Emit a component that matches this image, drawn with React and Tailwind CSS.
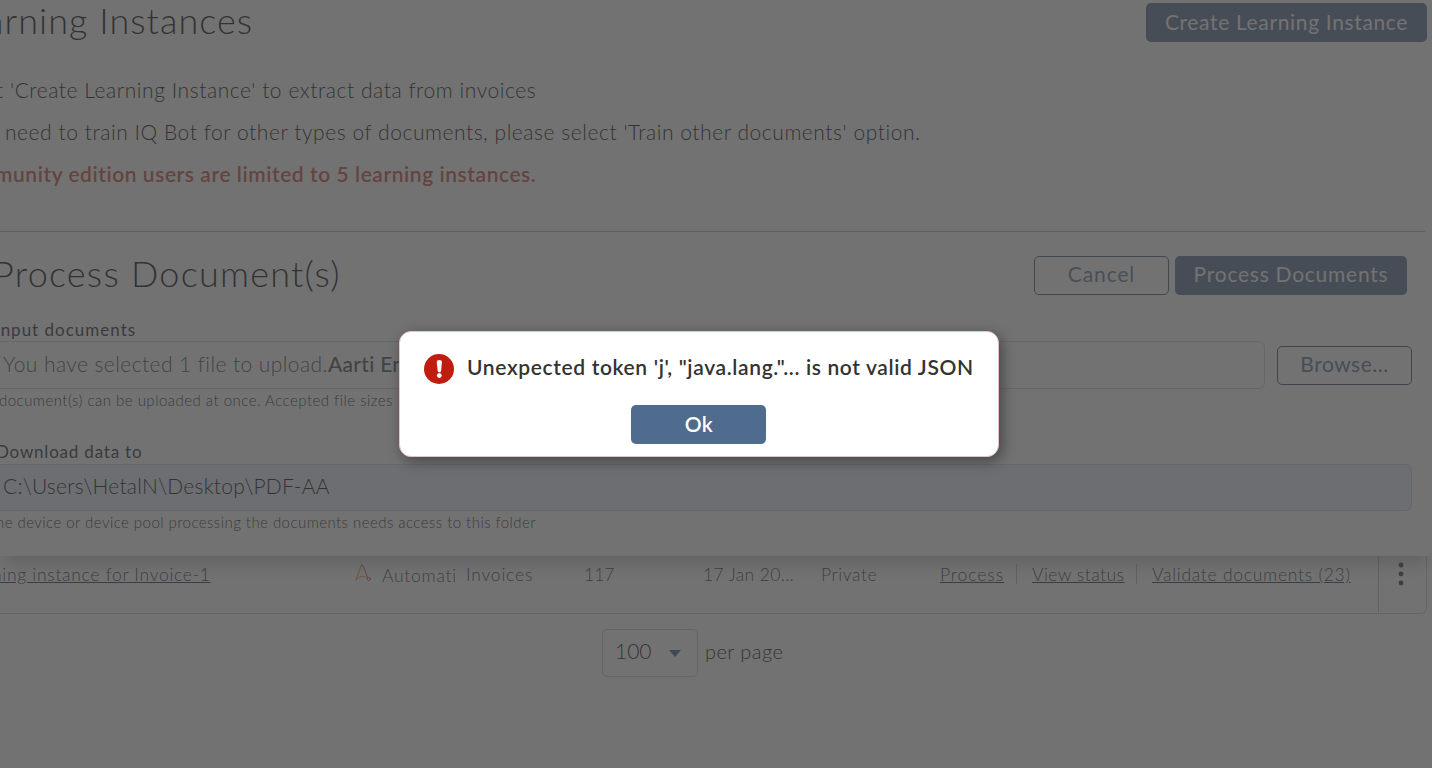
import React, { useState } from 'react';

const IconA = () => (
    <svg width="17" height="18" viewBox="0 0 17 18" fill="none" strokeWidth="1.1" strokeLinecap="round" strokeLinejoin="round">
        <path d="M6 1.9 Q7 0 8 1.9 L12.4 13.2" stroke="#d8603a" />
        <path d="M6 1.9 L1 16" stroke="#e89030" />
        <path d="M1 16 Q4 12.4 7.4 12.2 Q10 12.4 12.2 14.4" stroke="#e8803a" strokeWidth="0.9" />
        <circle cx="13.8" cy="15" r="1.6" stroke="#d8502a" strokeWidth="0.9" />
    </svg>
);

const ErrorIcon = () => (
    <svg width="30" height="30" viewBox="0 0 30 30" className="shrink-0">
        <circle cx="15" cy="15" r="15" fill="#c11c10" />
        <path d="M12.7 8.2 Q12.7 6 15.2 6 Q18 6 17.9 8.2 L17.1 17 Q17 18.4 15.4 18.4 Q13.9 18.4 13.7 17 Z" fill="#fff" />
        <circle cx="15.3" cy="21.6" r="2.4" fill="#fff" />
    </svg>
);

const Kebab = () => (
    <svg width="6" height="24" viewBox="0 0 6 24" fill="#333">
        <circle cx="3" cy="3" r="2.4" />
        <circle cx="3" cy="12" r="2.4" />
        <circle cx="3" cy="21" r="2.4" />
    </svg>
);

const InstanceRow = () => (
    <div className="flex h-[58px] w-[1427px] rounded-br-md border-b border-r border-[#c8cccf] text-[17.5px] leading-[38px] font-light text-[#333]">
        <a className="-ml-[8px] w-[360px] shrink-0 tracking-[0.7px] text-[#1c3048] underline underline-offset-1">ning instance for Invoice-1</a>
        <div className="flex w-[114px] shrink-0">
            <div className="mt-[8px] ml-[3px] w-[27px]"><IconA /></div>
            <span className="pt-[1px] tracking-[0.75px]">Automati</span>
        </div>
        <span className="w-[118px] shrink-0 tracking-[0.8px]">Invoices</span>
        <span className="w-[119px] shrink-0">117</span>
        <span className="w-[118px] shrink-0 tracking-[0.35px]">17 Jan 20...</span>
        <span className="w-[119px] shrink-0 tracking-[0.6px]">Private</span>
        <div className="flex w-[438px] shrink-0 text-[#1c3048]">
            <a className="w-[76px] tracking-[0.95px] underline underline-offset-1">Process</a>
            <div className="mt-[8px] h-[20px] w-[16px] border-l border-[#bbb]" />
            <a className="w-[104px] tracking-[0.5px] underline underline-offset-1">View status</a>
            <div className="mt-[8px] h-[20px] w-[16px] border-l border-[#bbb]" />
            <a className="tracking-[0.73px] underline underline-offset-1">Validate documents (23)</a>
        </div>
        <div className="flex flex-1 justify-center border-l border-[#b8bcc0] pt-[6px] pr-[3px]"><Kebab /></div>
    </div>
);

const ProcessPanel = () => (
    <section className="relative h-[325px] bg-white shadow-[0_12px_16px_-4px_rgba(0,0,0,0.25)]">
        <div className="mr-[7px] h-px bg-[#b0b0b0]" />
        <div className="flex items-start justify-between pt-[24px] pr-[25px]">
            <h2 className="-ml-[7px] h-[39px] text-[36px] leading-[35px] font-light tracking-[1.25px] text-black">Process Document(s)</h2>
            <div className="flex gap-[6px] text-[21px]">
                <button className="h-[39px] w-[135px] rounded-[5px] border border-[#3c5878] pb-[3px] tracking-[0.9px] text-[#5f7590]">Cancel</button>
                <button className="h-[39px] w-[232px] rounded-[5px] bg-[#4f6b8e] pb-[3px] tracking-[0.75px] text-white">Process Documents</button>
            </div>
        </div>

        <label className="mt-[24px] -ml-[5px] block text-[17px] leading-[22px] tracking-[1px] text-[#222]">Input documents</label>
        <div className="flex items-center">
            <div className="h-[48px] w-[1265px] rounded-r-md border-y border-r border-[#d0d3d6] pl-[3px] text-[21px] leading-[44px] whitespace-nowrap">
                <span className="font-light tracking-[0.42px] text-[#444]">You have selected 1 file to upload.</span>
                <span className="font-medium tracking-[0.3px] text-[#444]">Aarti En</span>
            </div>
            <button className="ml-[12px] h-[39px] w-[135px] rounded-[5px] border border-[#3c4c66] pb-[2px] text-[21px] tracking-[0.5px] text-[#4f6b8e]">Browse...</button>
        </div>
        <p className="-ml-px pt-[1px] text-[15px] leading-[20px] font-light tracking-[0.48px] text-[#222]">document(s) can be uploaded at once. Accepted file sizes</p>

        <label className="mt-[31px] -ml-[4px] block text-[17px] leading-[22px] tracking-[0.8px] text-[#222]">Download data to</label>
        <div className="mt-[1px] h-[47px] w-[1412px] rounded-r-md border-y border-r border-[#d0d3d6] bg-[#e8f0fe] pl-[3px] text-[21px] leading-[42px] font-light tracking-[0.22px] text-black">
            C:\Users\HetalN\Desktop\PDF-AA
        </div>
        <p className="-ml-[4px] pt-[1px] text-[15px] leading-[20px] font-light tracking-[0.45px] text-[#222]">he device or device pool processing the documents needs access to this folder</p>
    </section>
);

const ErrorModal = ({ onClose }) => (
    <div className="absolute inset-0 bg-[#434343]/75">
        <div className="mt-[331px] ml-[399px] flex h-[126px] w-[600px] flex-col items-center rounded-[12px] border border-[#e6c4c4] bg-white shadow-[3px_4px_14px_rgba(0,0,0,0.4)]">
            <div className="flex w-full pt-[22px] pl-[24px]">
                <ErrorIcon />
                <p className="ml-[13px] text-[21px] leading-[26px] font-semibold tracking-[0.64px] whitespace-nowrap text-[#333]">
                    Unexpected token 'j', "java.lang."... is not valid JSON
                </p>
            </div>
            <button onClick={onClose} className="mt-[21px] mr-[2px] h-[39px] w-[135px] rounded-[5px] bg-[#4f6b8e] pb-[1px] pl-[2px] text-[21px] font-semibold tracking-[0.4px] text-white">Ok</button>
        </div>
    </div>
);

const App = () => {
    const [showError, setShowError] = useState(true);

    return (
        <div className="relative h-[768px] w-[1432px] overflow-hidden bg-white font-['Lato',sans-serif]">
            <header className="flex h-[69px] justify-between pt-[3px] pr-[5px]">
                <h1 className="-ml-[14px] text-[36px] leading-[34px] font-light tracking-[1.05px] text-black">arning Instances</h1>
                <button className="h-[39px] w-[281px] rounded-[5px] bg-[#4f6b8e] pb-[2px] text-[21px] tracking-[0.65px] text-white">Create Learning Instance</button>
            </header>

            {/* intro text */}
            <div className="h-[162px] text-[21px] leading-[42px] font-light whitespace-nowrap text-black">
                <p className="-ml-[4px] tracking-[0.56px]">t 'Create Learning Instance' to extract data from invoices</p>
                <p className="pl-[5px] tracking-[0.55px]">need to train IQ Bot for other types of documents, please select 'Train other documents' option.</p>
                <p className="-ml-[5px] font-semibold tracking-[0.55px] text-[#c84834]">munity edition users are limited to 5 learning instances.</p>
            </div>

            <ProcessPanel />
            <InstanceRow />

            {/* pagination */}
            <div className="mt-[15px] ml-[602px] flex items-center">
                <div className="flex h-[48px] w-[96px] items-center rounded-[5px] border border-[#c8ccd0] pb-[4px] pl-[12px] text-[21px] font-light text-black">
                    100
                    <span className="mt-[4px] ml-[17px] border-x-[6px] border-t-[7px] border-x-transparent border-t-[#3c5878]" />
                </div>
                <span className="ml-[7px] pb-[4px] text-[20px] leading-[24px] font-light tracking-[0.45px] text-black">per page</span>
            </div>

            {showError && <ErrorModal onClose={() => setShowError(false)} />}
        </div>
    );
};

export default App;
